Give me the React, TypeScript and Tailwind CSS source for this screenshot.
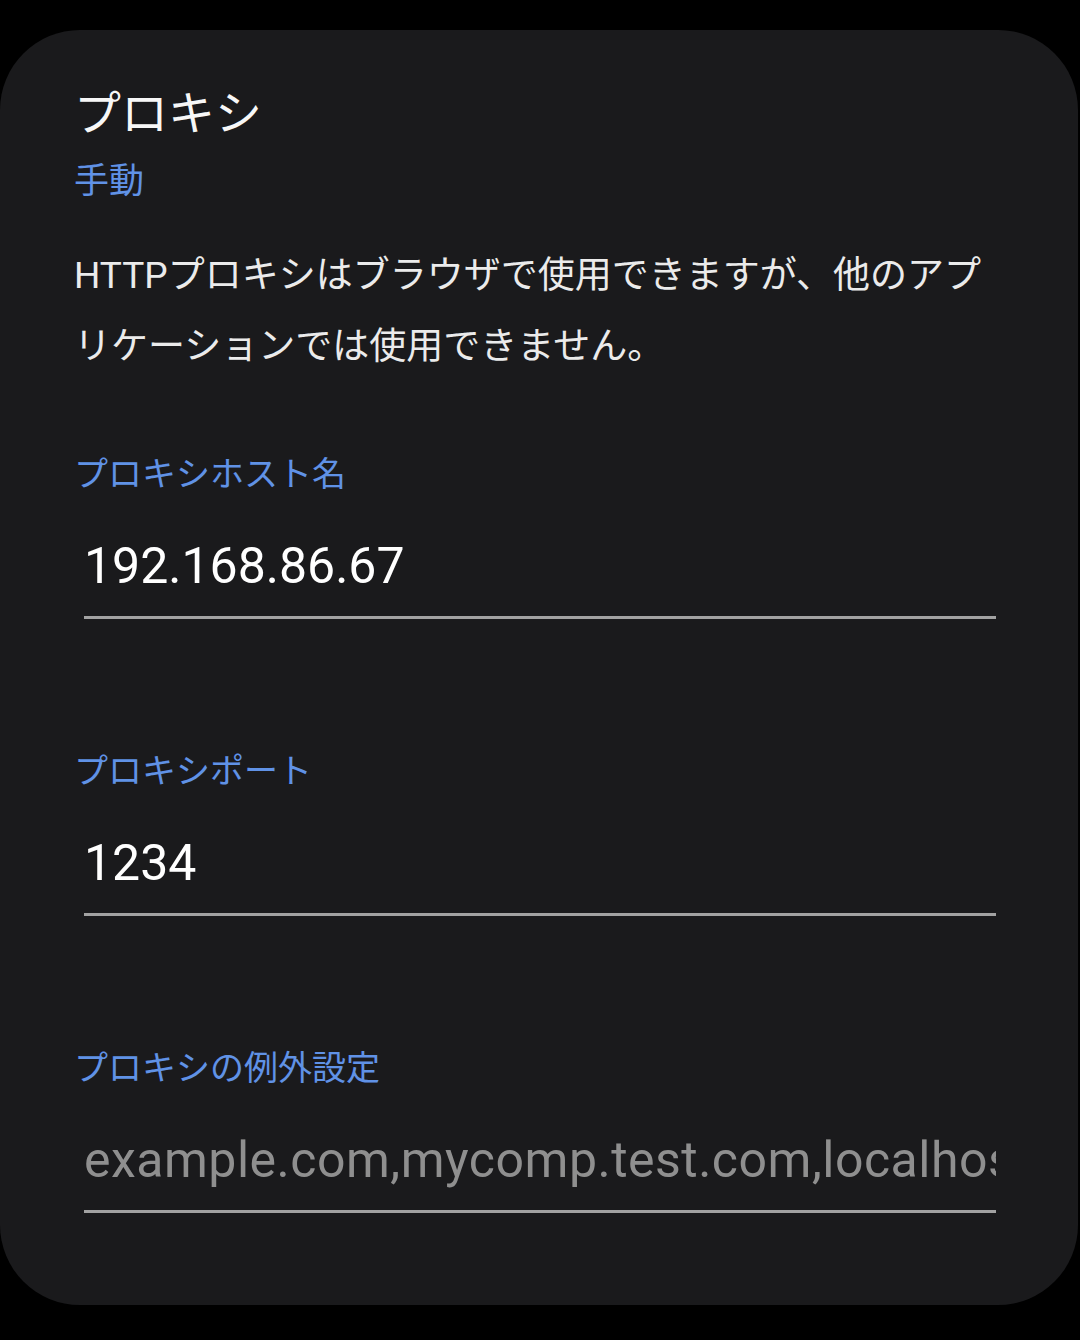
const jp = "font-['Noto_Sans_CJK_JP',sans-serif]"

interface Field {
  label: string
  value?: string
  placeholder?: string
}

const fields: Field[] = [
  { label: 'プロキシホスト名', value: '192.168.86.67' },
  { label: 'プロキシポート', value: '1234' },
  { label: 'プロキシの例外設定', placeholder: 'example.com,mycomp.test.com,localhost' },
]

const ProxyField = ({ field, first }: { field: Field; first: boolean }) => (
  <div className={first ? 'mt-[68px]' : 'mt-[128px]'}>
    <div className={`${jp} text-[34px] leading-[44px] text-[#6092e6]`}>{field.label}</div>
    <div className="mt-[42px] ml-[10px] w-[912px] border-b-[3px] border-[#a2a2a2] pb-[20px]">
      <input
        readOnly
        defaultValue={field.value}
        placeholder={field.placeholder}
        className="block h-[60px] w-full bg-transparent p-0 font-['Roboto',sans-serif] text-[50px] leading-[60px] text-white outline-none placeholder:tracking-[0.5px] placeholder:text-[#8f8f8f]"
      />
    </div>
  </div>
)

export default function App() {
  return (
    <div className="min-h-[1340px] bg-black pt-[30px]">
      <div className="w-[1078px] rounded-[80px] bg-[#1a1a1c] pt-[52px] pb-[92px] pl-[74px]">
        <h1 className={`${jp} text-[47px] leading-[56px] font-normal text-[#f7f7f7]`}>プロキシ</h1>
        <div className={`${jp} mt-[18px] text-[35px] leading-[44px] text-[#6092e6]`}>手動</div>
        <p className="mt-[40px] font-['Roboto','Noto_Sans_CJK_JP',sans-serif] text-[37px] leading-[71px] text-[#ebebeb]">
          HTTPプロキシはブラウザで使用できますが、他のアプ
          <br />
          リケーションでは使用できません。
        </p>
        {fields.map((field, i) => (
          <ProxyField key={field.label} field={field} first={i === 0} />
        ))}
      </div>
    </div>
  )
}
